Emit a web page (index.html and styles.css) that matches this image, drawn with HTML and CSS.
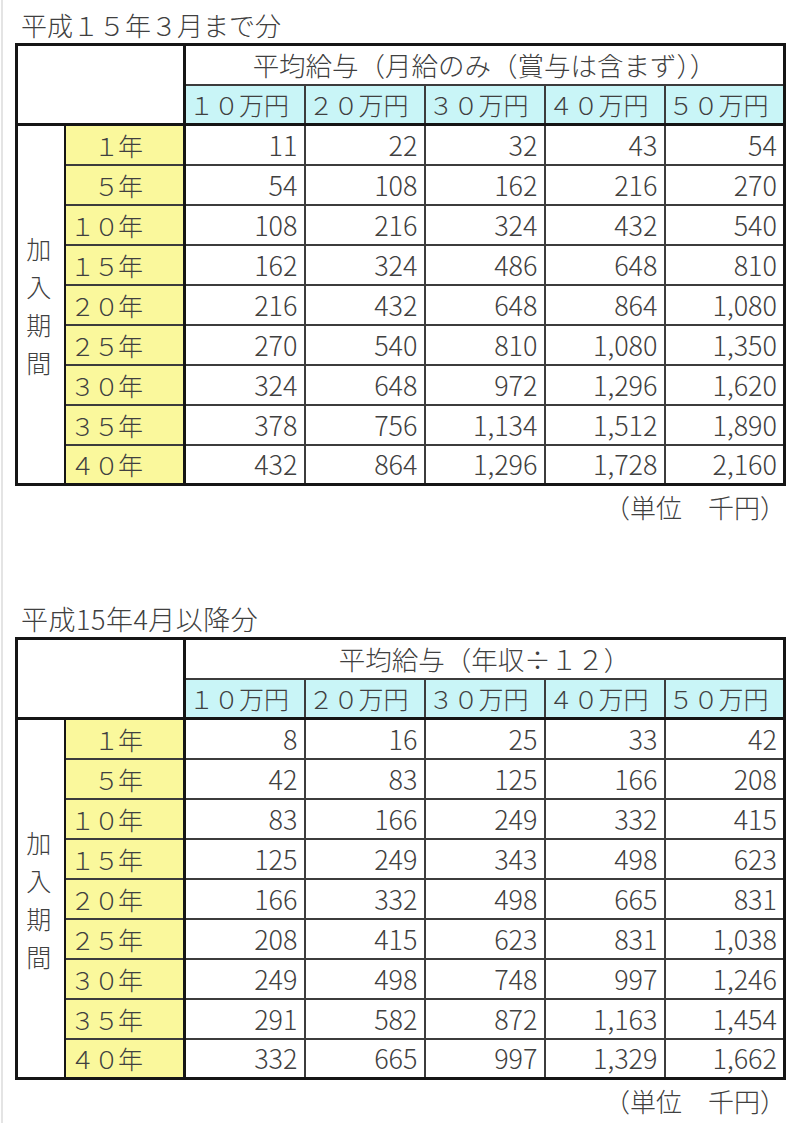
FILE: index.html
```html
<!DOCTYPE html>
<html lang="ja">
<head>
<meta charset="utf-8">
<title>平均給与と加入期間</title>
<link rel="stylesheet" href="styles.css">
</head>
<body>
<div class="page">
  <div class="title">平成１５年３月まで分</div>
  <table class="grid">
    <colgroup>
      <col class="c-period"><col class="c-year">
      <col class="c-val"><col class="c-val"><col class="c-val"><col class="c-val"><col class="c-val">
    </colgroup>
    <tr class="h1">
      <td class="corner" colspan="2" rowspan="2"></td>
      <td class="band" colspan="5">平均給与（月給のみ（賞与は含まず））</td>
    </tr>
    <tr class="h2">
      <td class="sal">１０万円</td><td class="sal">２０万円</td><td class="sal">３０万円</td><td class="sal">４０万円</td><td class="sal">５０万円</td>
    </tr>
    <tr class="first">
      <td class="period" rowspan="9">加<br>入<br>期<br>間</td>
      <td class="yr">１年</td><td class="num">11</td><td class="num">22</td><td class="num">32</td><td class="num">43</td><td class="num">54</td>
    </tr>
    <tr><td class="yr">５年</td><td class="num">54</td><td class="num">108</td><td class="num">162</td><td class="num">216</td><td class="num">270</td></tr>
    <tr><td class="yr">１０年</td><td class="num">108</td><td class="num">216</td><td class="num">324</td><td class="num">432</td><td class="num">540</td></tr>
    <tr><td class="yr">１５年</td><td class="num">162</td><td class="num">324</td><td class="num">486</td><td class="num">648</td><td class="num">810</td></tr>
    <tr><td class="yr">２０年</td><td class="num">216</td><td class="num">432</td><td class="num">648</td><td class="num">864</td><td class="num">1,080</td></tr>
    <tr><td class="yr">２５年</td><td class="num">270</td><td class="num">540</td><td class="num">810</td><td class="num">1,080</td><td class="num">1,350</td></tr>
    <tr><td class="yr">３０年</td><td class="num">324</td><td class="num">648</td><td class="num">972</td><td class="num">1,296</td><td class="num">1,620</td></tr>
    <tr><td class="yr">３５年</td><td class="num">378</td><td class="num">756</td><td class="num">1,134</td><td class="num">1,512</td><td class="num">1,890</td></tr>
    <tr><td class="yr">４０年</td><td class="num">432</td><td class="num">864</td><td class="num">1,296</td><td class="num">1,728</td><td class="num">2,160</td></tr>
  </table>
  <div class="unit">（単位　千円）</div>

  <div class="title second">平成15年4月以降分</div>
  <table class="grid">
    <colgroup>
      <col class="c-period"><col class="c-year">
      <col class="c-val"><col class="c-val"><col class="c-val"><col class="c-val"><col class="c-val">
    </colgroup>
    <tr class="h1">
      <td class="corner" colspan="2" rowspan="2"></td>
      <td class="band" colspan="5">平均給与（年収÷１２）</td>
    </tr>
    <tr class="h2">
      <td class="sal">１０万円</td><td class="sal">２０万円</td><td class="sal">３０万円</td><td class="sal">４０万円</td><td class="sal">５０万円</td>
    </tr>
    <tr class="first">
      <td class="period" rowspan="9">加<br>入<br>期<br>間</td>
      <td class="yr">１年</td><td class="num">8</td><td class="num">16</td><td class="num">25</td><td class="num">33</td><td class="num">42</td>
    </tr>
    <tr><td class="yr">５年</td><td class="num">42</td><td class="num">83</td><td class="num">125</td><td class="num">166</td><td class="num">208</td></tr>
    <tr><td class="yr">１０年</td><td class="num">83</td><td class="num">166</td><td class="num">249</td><td class="num">332</td><td class="num">415</td></tr>
    <tr><td class="yr">１５年</td><td class="num">125</td><td class="num">249</td><td class="num">343</td><td class="num">498</td><td class="num">623</td></tr>
    <tr><td class="yr">２０年</td><td class="num">166</td><td class="num">332</td><td class="num">498</td><td class="num">665</td><td class="num">831</td></tr>
    <tr><td class="yr">２５年</td><td class="num">208</td><td class="num">415</td><td class="num">623</td><td class="num">831</td><td class="num">1,038</td></tr>
    <tr><td class="yr">３０年</td><td class="num">249</td><td class="num">498</td><td class="num">748</td><td class="num">997</td><td class="num">1,246</td></tr>
    <tr><td class="yr">３５年</td><td class="num">291</td><td class="num">582</td><td class="num">872</td><td class="num">1,163</td><td class="num">1,454</td></tr>
    <tr><td class="yr">４０年</td><td class="num">332</td><td class="num">665</td><td class="num">997</td><td class="num">1,329</td><td class="num">1,662</td></tr>
  </table>
  <div class="unit">（単位　千円）</div>
</div>
</body>
</html>
```
FILE: styles.css
```css
html, body {
  margin: 0;
  padding: 0;
  background: #ffffff;
}

body {
  font-family: "Noto Sans CJK JP", "Noto Sans", sans-serif;
  color: #404040;
  font-weight: 300;
}

.page {
  margin-left: 1px;
  border-left: 2px solid #e4e4e4;
  height: 1123px;
  box-sizing: border-box;
  padding: 7px 0 0 12px;
  overflow: hidden;
}

.title {
  font-size: 26px;
  line-height: 36px;
  padding-left: 6px;
  white-space: nowrap;
}

.title.second {
  margin-top: 79px;
  font-size: 27px;
  letter-spacing: 0.5px;
}

.grid {
  border-collapse: collapse;
  table-layout: fixed;
  border: 3px solid #151515;
  font-size: 25px;
}

.c-period { width: 48px; }
.c-year { width: 120px; }
.c-val { width: 120px; }

.grid td {
  border: 2px solid #3c3c3c;
  padding: 0;
  line-height: 30px;
  white-space: nowrap;
  overflow: hidden;
}

.h1 { height: 39px; }
.h2 { height: 41px; }
.grid tr { height: 40px; }

.corner {
  border-right: 3px solid #151515 !important;
  border-bottom: 3px solid #151515 !important;
  background: #ffffff;
}

.band {
  text-align: center;
  padding-top: 2px;
  font-size: 26.5px;
}

.sal {
  background: #c9f5f7;
  text-align: left;
  padding-left: 3px !important;
  border-bottom: 3px solid #151515 !important;
}

.period {
  text-align: center;
  vertical-align: middle;
  line-height: 38px !important;
  border-right: 2px solid #151515 !important;
  padding-left: 0;
  padding-right: 4px !important;
}

.yr {
  background: #faf89c;
  text-align: right;
  padding-right: 41px !important;
  letter-spacing: -1px;
  border-right: 3px solid #151515 !important;
}

.num {
  text-align: right;
  padding-right: 6px !important;
  font-size: 27px;
}

.unit {
  width: 771px;
  text-align: right;
  font-size: 26px;
  line-height: 30px;
  margin-top: 6px;
}
```
